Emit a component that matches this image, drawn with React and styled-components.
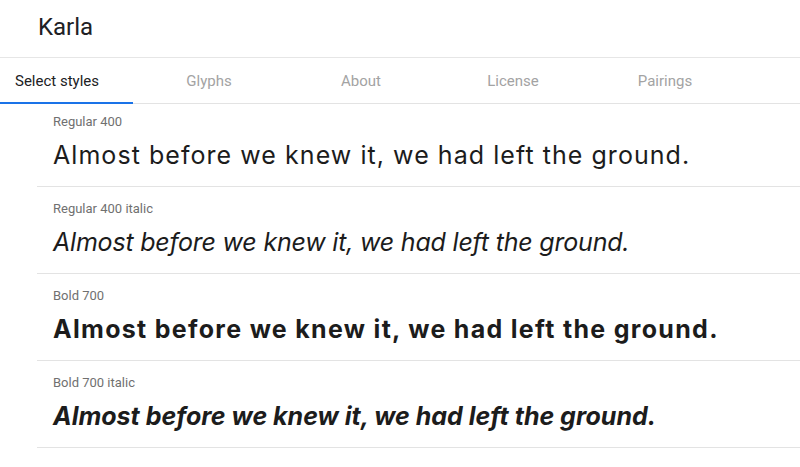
import React from "react";
import styled, { createGlobalStyle } from "styled-components";

const Global = createGlobalStyle`
  html, body { margin: 0; padding: 0; background: #fff; }
  body { font-family: Roboto, "Liberation Sans", sans-serif; overflow: hidden; }
`;

const Page = styled.div`
  width: 800px;
  height: 467px;
  overflow: hidden;
  background: #fff;
`;

const Header = styled.header`
  height: 58px;
  border-bottom: 1px solid #e6e6e6;
  display: flex;
  align-items: center;
  padding-left: 38px;
  box-sizing: border-box;
`;

const Title = styled.h1`
  margin: -3px 0 0;
  font-family: Roboto, sans-serif;
  font-weight: 400;
  font-size: 24px;
  color: #202124;
`;

const TabBar = styled.nav`
  display: flex;
  height: 46px;
  border-bottom: 1px solid #e3e3e3;
  box-sizing: border-box;
  margin-left: -19px;
`;

const Tab = styled.div`
  width: 152px;
  flex: none;
  display: flex;
  align-items: center;
  justify-content: center;
  box-sizing: border-box;
  font-size: 15px;
  color: ${(p) => (p.$active ? "#202124" : "#a3a3a3")};
  border-bottom: 2px solid ${(p) => (p.$active ? "#1a73e8" : "transparent")};
  margin-bottom: -1px;
  padding-top: 2px;
`;

const Styles = styled.section`
  margin-left: 37px;
`;

const Row = styled.div`
  display: flex;
  flex-direction: column;
  padding: ${(p) => (p.$first ? "10px" : "14px")} 0 14px 16px;
  border-bottom: 1px solid #e3e3e3;
`;

const Label = styled.div`
  font-family: Roboto, sans-serif;
  font-size: 13px;
  line-height: 16px;
  color: #707070;
`;

const Sample = styled.div`
  margin-top: 8px;
  font-family: Inter, sans-serif;
  font-size: 25px;
  line-height: 34px;
  color: #1c1c1c;
  white-space: nowrap;
  font-weight: ${(p) => p.$weight};
  font-style: ${(p) => (p.$italic ? "italic" : "normal")};
  letter-spacing: ${(p) => p.$spacing}px;
`;

const tabs = ["Select styles", "Glyphs", "About", "License", "Pairings"];
const variants = [
  { label: "Regular 400", weight: 400, italic: false, spacing: 1.05 },
  { label: "Regular 400 italic", weight: 400, italic: true, spacing: -0.2 },
  { label: "Bold 700", weight: 700, italic: false, spacing: 1.3 },
  { label: "Bold 700 italic", weight: 700, italic: true, spacing: 0 },
];
const text = "Almost before we knew it, we had left the ground.";

export default function App() {
  return (
    <Page>
      <Global />
      <Header>
        <Title>Karla</Title>
      </Header>
      <TabBar>
        {tabs.map((t, i) => (
          <Tab key={t} $active={i === 0}>{t}</Tab>
        ))}
      </TabBar>
      <Styles>
        {variants.map((v, i) => (
          <Row key={v.label} $first={i === 0}>
            <Label>{v.label}</Label>
            <Sample $weight={v.weight} $italic={v.italic} $spacing={v.spacing}>
              {text}
            </Sample>
          </Row>
        ))}
      </Styles>
    </Page>
  );
}
